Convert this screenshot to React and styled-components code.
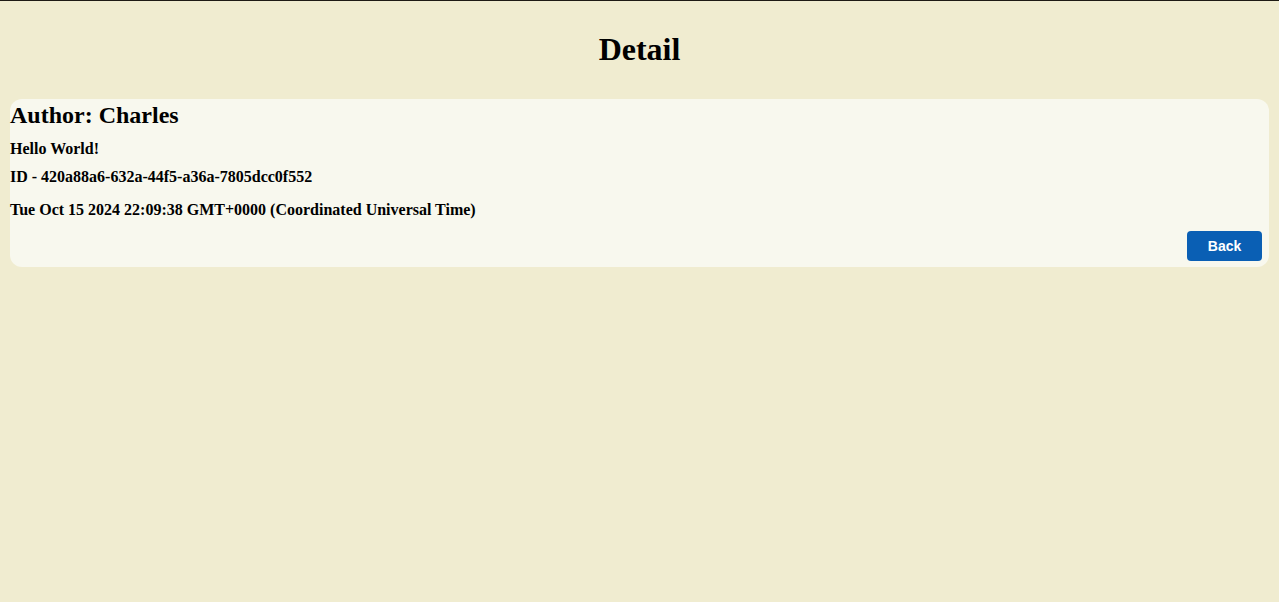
import React from 'react';
import styled, { createGlobalStyle } from 'styled-components';

const GlobalStyle = createGlobalStyle`
  html, body {
    margin: 0;
    padding: 0;
    background: #f0ecd0;
  }
  body {
    font-family: "Liberation Serif", "Times New Roman", serif;
    color: #000;
  }
`;

const Page = styled.div`
  min-height: 602px;
  box-sizing: border-box;
  border-top: 1px solid #1e1a14;
  padding: 0 10px;
`;

const Title = styled.h1`
  margin: 30px 0 31px;
  font-size: 32px;
  font-weight: bold;
  text-align: center;
  line-height: 37px;
`;

const Card = styled.section`
  display: flex;
  flex-direction: column;
  background: #f8f8ee;
  border-radius: 12px;
  padding: 3px 0 6px;
`;

const Author = styled.h2`
  margin: 0;
  font-size: 24px;
  line-height: 27px;
`;

const Line = styled.p`
  margin: ${p => p.gap}px 0 0;
  font-size: 16px;
  font-weight: bold;
  line-height: 18px;
`;

const Footer = styled.div`
  display: flex;
  justify-content: flex-end;
  margin-top: 12px;
  padding-right: 7px;
`;

const BackButton = styled.button`
  width: 75px;
  height: 30px;
  border: none;
  border-radius: 4px;
  background: #0a5fb4;
  color: #fff;
  font-family: "Liberation Sans", Arial, sans-serif;
  font-size: 14px;
  font-weight: bold;
  cursor: pointer;
`;

export default function App() {
  return (
    <>
      <GlobalStyle />
      <Page>
        <Title>Detail</Title>
        <Card>
          <Author>Author: Charles</Author>
          <Line gap={11}>Hello World!</Line>
          <Line gap={10}>ID - 420a88a6-632a-44f5-a36a-7805dcc0f552</Line>
          <Line gap={15}>Tue Oct 15 2024 22:09:38 GMT+0000 (Coordinated Universal Time)</Line>
          <Footer>
            <BackButton>Back</BackButton>
          </Footer>
        </Card>
      </Page>
    </>
  );
}
